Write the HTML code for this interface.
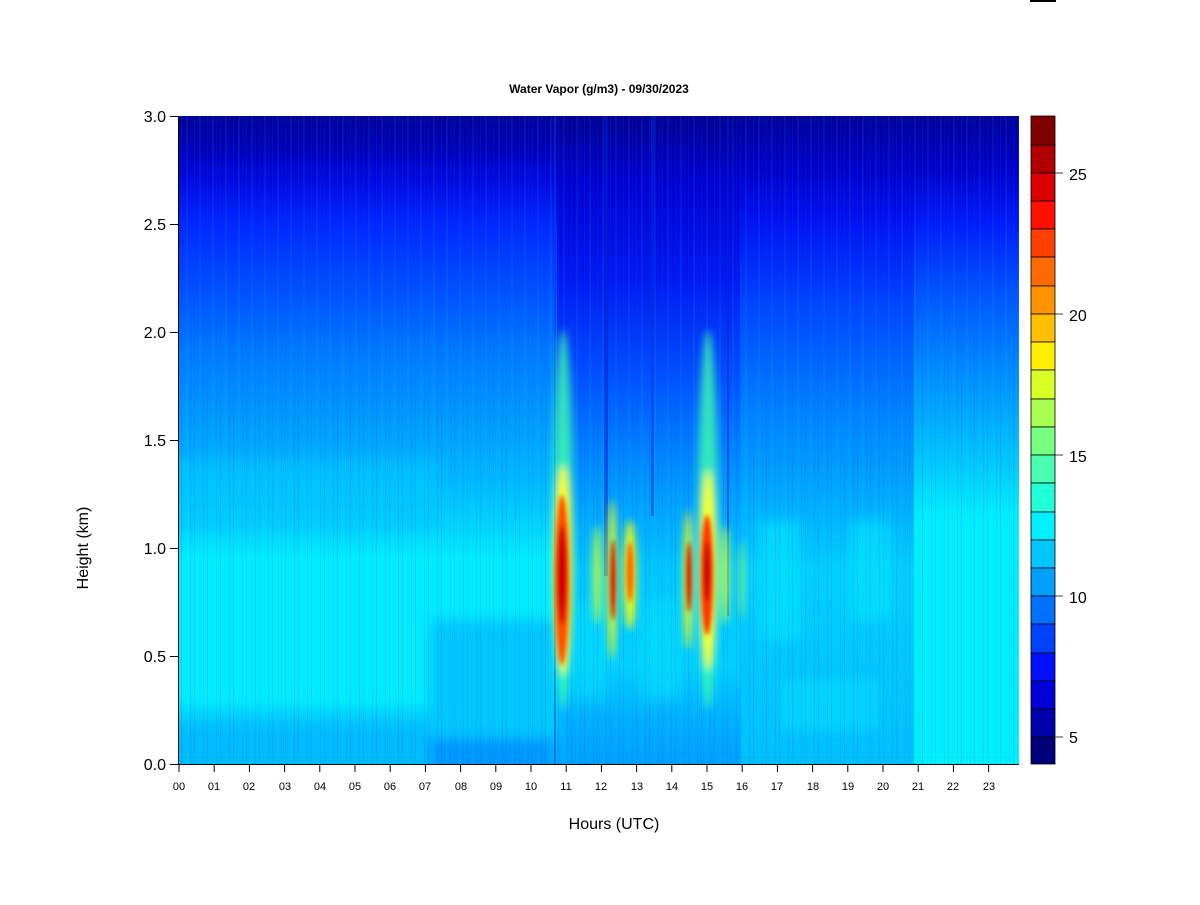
<!DOCTYPE html>
<html><head><meta charset="utf-8"><style>
body{margin:0;background:#fff;width:1200px;height:900px;overflow:hidden;font-family:"Liberation Sans",sans-serif}
</style></head><body>
<svg width="1200" height="900" xmlns="http://www.w3.org/2000/svg" font-family="Liberation Sans, sans-serif">
<defs>
<clipPath id="pc"><rect x="179" y="116" width="840" height="648"/></clipPath>
<linearGradient id="gA" x1="0" y1="116" x2="0" y2="764" gradientUnits="userSpaceOnUse">
<stop offset="0" stop-color="#000098"/>
<stop offset="0.05" stop-color="#0000b8"/>
<stop offset="0.1" stop-color="#0008e0"/>
<stop offset="0.17" stop-color="#0028ff"/>
<stop offset="0.27" stop-color="#0050ff"/>
<stop offset="0.36" stop-color="#0078ff"/>
<stop offset="0.46" stop-color="#0098ff"/>
<stop offset="0.56" stop-color="#00b8ff"/>
<stop offset="0.64" stop-color="#00d8ff"/>
<stop offset="0.68" stop-color="#00ecff"/>
<stop offset="0.9" stop-color="#00ecff"/>
<stop offset="0.94" stop-color="#00c4ff"/>
<stop offset="1" stop-color="#00b8ff"/>
</linearGradient>
<linearGradient id="gB" x1="0" y1="116" x2="0" y2="764" gradientUnits="userSpaceOnUse">
<stop offset="0" stop-color="#000090"/>
<stop offset="0.1" stop-color="#0000d0"/>
<stop offset="0.25" stop-color="#0018f0"/>
<stop offset="0.4" stop-color="#0050ff"/>
<stop offset="0.55" stop-color="#0090ff"/>
<stop offset="0.7" stop-color="#00c8ff"/>
<stop offset="0.85" stop-color="#00d0ff"/>
<stop offset="0.93" stop-color="#00b0ff"/>
<stop offset="1" stop-color="#00a0ff"/>
</linearGradient>
<linearGradient id="gC" x1="0" y1="116" x2="0" y2="764" gradientUnits="userSpaceOnUse">
<stop offset="0" stop-color="#000098"/>
<stop offset="0.08" stop-color="#0000c8"/>
<stop offset="0.16" stop-color="#0010f0"/>
<stop offset="0.3" stop-color="#0048ff"/>
<stop offset="0.45" stop-color="#0080ff"/>
<stop offset="0.58" stop-color="#00a8ff"/>
<stop offset="0.7" stop-color="#00d0ff"/>
<stop offset="0.85" stop-color="#00c8ff"/>
<stop offset="1" stop-color="#00c0ff"/>
</linearGradient>
<linearGradient id="gD" x1="0" y1="116" x2="0" y2="764" gradientUnits="userSpaceOnUse">
<stop offset="0" stop-color="#000098"/>
<stop offset="0.08" stop-color="#0000c8"/>
<stop offset="0.16" stop-color="#0018f8"/>
<stop offset="0.28" stop-color="#0058ff"/>
<stop offset="0.42" stop-color="#0098ff"/>
<stop offset="0.55" stop-color="#00d0ff"/>
<stop offset="0.62" stop-color="#00f0ff"/>
<stop offset="1" stop-color="#00f0ff"/>
</linearGradient>
<filter id="bl" x="-50%" y="-50%" width="200%" height="200%"><feGaussianBlur stdDeviation="4"/></filter>
<filter id="bl2" x="-50%" y="-50%" width="200%" height="200%"><feGaussianBlur stdDeviation="2"/></filter>
<filter id="bl6" x="-20%" y="-20%" width="140%" height="140%"><feGaussianBlur stdDeviation="6"/></filter>
<pattern id="str" width="13" height="648" patternUnits="userSpaceOnUse" x="179" y="116">
<rect x="2" width="1" height="648" fill="#0050ff" opacity="0.2"/>
<rect x="7" width="2" height="648" fill="#00e0ff" opacity="0.1"/>
<rect x="11" width="1" height="648" fill="#0040ff" opacity="0.15"/>
</pattern>
</defs>
<rect x="1030" y="0" width="26" height="2" fill="#000"/>
<text x="599" y="93" font-size="12" font-weight="bold" text-anchor="middle">Water Vapor (g/m3) - 09/30/2023</text>
<g clip-path="url(#pc)">
<rect x="179" y="116" width="380" height="648" fill="url(#gA)"/>
<rect x="557" y="116" width="185" height="648" fill="url(#gB)"/>
<rect x="740" y="116" width="176" height="648" fill="url(#gC)"/>
<rect x="914" y="116" width="105" height="648" fill="url(#gD)"/>
<g filter="url(#bl6)">
<rect x="430" y="620" width="128" height="150" fill="#00c8ff"/>
<rect x="160" y="730" width="270" height="50" fill="#00bcff"/>
<rect x="430" y="738" width="125" height="40" fill="#0098ff"/>
<rect x="160" y="460" width="280" height="70" fill="#00c8ff" opacity="0.6"/>
<rect x="760" y="520" width="40" height="120" fill="#00e8ff" opacity="0.6"/>
<rect x="850" y="520" width="40" height="100" fill="#00e8ff" opacity="0.6"/>
<rect x="780" y="680" width="100" height="50" fill="#00e0ff" opacity="0.6"/>
<rect x="640" y="600" width="40" height="100" fill="#00e0ff" opacity="0.6"/>
<rect x="575" y="600" width="30" height="100" fill="#00e0ff" opacity="0.6"/>
</g>
<rect x="179" y="116" width="840" height="648" fill="url(#str)"/>
<g opacity="0.5">
<rect x="554" y="116" width="2" height="648" fill="#0040e0"/>
<rect x="604" y="116" width="4" height="460" fill="#0020d0"/>
<rect x="651" y="116" width="3" height="400" fill="#0030e0"/>
<rect x="727" y="116" width="2" height="500" fill="#0020d0"/>
</g>
<g filter="url(#bl)">
<ellipse cx="563" cy="520" rx="10" ry="190" fill="#40ffb0" opacity="0.8"/>
<ellipse cx="708" cy="520" rx="10" ry="190" fill="#40ffb0" opacity="0.8"/>
<ellipse cx="563" cy="570" rx="9" ry="105" fill="#ffff00"/>
<ellipse cx="708" cy="570" rx="8" ry="100" fill="#ffff00"/>
<ellipse cx="612" cy="580" rx="4" ry="80" fill="#ffff00"/>
<ellipse cx="630" cy="575" rx="6" ry="55" fill="#ffff00"/>
<ellipse cx="688" cy="580" rx="4" ry="70" fill="#ffff00"/>
<ellipse cx="597" cy="575" rx="4" ry="50" fill="#c0ff40"/>
<ellipse cx="725" cy="575" rx="4" ry="50" fill="#c0ff40"/>
<ellipse cx="742" cy="580" rx="3" ry="40" fill="#a0ff60" opacity="0.7"/>
</g>
<g filter="url(#bl2)">
<ellipse cx="562" cy="580" rx="7" ry="85" fill="#ff5000"/>
<ellipse cx="562" cy="575" rx="5" ry="50" fill="#d00000"/>
<ellipse cx="707" cy="575" rx="6" ry="60" fill="#ff3000"/>
<ellipse cx="707" cy="572" rx="3" ry="30" fill="#c00000"/>
<ellipse cx="613" cy="580" rx="2.5" ry="40" fill="#e00000"/>
<ellipse cx="630" cy="572" rx="3.5" ry="30" fill="#ff6000"/>
<ellipse cx="689" cy="577" rx="2.5" ry="35" fill="#e00000"/>
</g>
</g>
<g stroke="#000" stroke-width="1">
<line x1="178.5" y1="116" x2="178.5" y2="764"/>
<line x1="170" y1="116.5" x2="179" y2="116.5"/>
<line x1="170" y1="224.5" x2="179" y2="224.5"/>
<line x1="170" y1="332.5" x2="179" y2="332.5"/>
<line x1="170" y1="440.5" x2="179" y2="440.5"/>
<line x1="170" y1="548.5" x2="179" y2="548.5"/>
<line x1="170" y1="656.5" x2="179" y2="656.5"/>
<line x1="170" y1="764.5" x2="179" y2="764.5"/>
<line x1="179" y1="764.5" x2="1019" y2="764.5"/>
</g>
<g font-size="16" text-anchor="end">
<text x="166" y="122">3.0</text><text x="166" y="230">2.5</text><text x="166" y="338">2.0</text>
<text x="166" y="446">1.5</text><text x="166" y="554">1.0</text><text x="166" y="662">0.5</text><text x="166" y="770">0.0</text>
</g>
<g font-size="11" text-anchor="middle">
<path d="M179 764v8M214.2 764v8M249.4 764v8M284.6 764v8M319.8 764v8M355 764v8M390.2 764v8M425.4 764v8M460.6 764v8M495.8 764v8M531 764v8M566.2 764v8M601.4 764v8M636.6 764v8M671.8 764v8M707 764v8M742.2 764v8M777.4 764v8M812.6 764v8M847.8 764v8M883 764v8M918.2 764v8M953.4 764v8M988.6 764v8" stroke="#000"/>
<text x="179" y="790">00</text><text x="214" y="790">01</text><text x="249" y="790">02</text><text x="285" y="790">03</text><text x="320" y="790">04</text><text x="355" y="790">05</text><text x="390" y="790">06</text><text x="425" y="790">07</text><text x="461" y="790">08</text><text x="496" y="790">09</text><text x="531" y="790">10</text><text x="566" y="790">11</text><text x="601" y="790">12</text><text x="637" y="790">13</text><text x="672" y="790">14</text><text x="707" y="790">15</text><text x="742" y="790">16</text><text x="777" y="790">17</text><text x="813" y="790">18</text><text x="848" y="790">19</text><text x="883" y="790">20</text><text x="918" y="790">21</text><text x="953" y="790">22</text><text x="989" y="790">23</text>
</g>
<text x="614" y="829" font-size="16" text-anchor="middle">Hours (UTC)</text>
<text x="88" y="548" font-size="16" text-anchor="middle" transform="rotate(-90 88 548)">Height (km)</text>
<g stroke="#000" stroke-width="0.8">
<rect x="1031" y="116" width="24" height="29" fill="#800000"/>
<rect x="1031" y="145" width="24" height="28" fill="#b00000"/>
<rect x="1031" y="173" width="24" height="28" fill="#dc0000"/>
<rect x="1031" y="201" width="24" height="28" fill="#ff1000"/>
<rect x="1031" y="229" width="24" height="28" fill="#ff4000"/>
<rect x="1031" y="257" width="24" height="29" fill="#ff6a00"/>
<rect x="1031" y="286" width="24" height="28" fill="#ff9400"/>
<rect x="1031" y="314" width="24" height="28" fill="#ffbe00"/>
<rect x="1031" y="342" width="24" height="28" fill="#ffee00"/>
<rect x="1031" y="370" width="24" height="29" fill="#d8ff26"/>
<rect x="1031" y="399" width="24" height="28" fill="#a8ff50"/>
<rect x="1031" y="427" width="24" height="28" fill="#78ff80"/>
<rect x="1031" y="455" width="24" height="28" fill="#48ffb0"/>
<rect x="1031" y="483" width="24" height="29" fill="#20ffd8"/>
<rect x="1031" y="512" width="24" height="28" fill="#00f0ff"/>
<rect x="1031" y="540" width="24" height="28" fill="#00c8ff"/>
<rect x="1031" y="568" width="24" height="28" fill="#00a0ff"/>
<rect x="1031" y="596" width="24" height="28" fill="#0070ff"/>
<rect x="1031" y="624" width="24" height="29" fill="#0040ff"/>
<rect x="1031" y="653" width="24" height="28" fill="#0010ff"/>
<rect x="1031" y="681" width="24" height="28" fill="#0000d8"/>
<rect x="1031" y="709" width="24" height="28" fill="#0000aa"/>
<rect x="1031" y="737" width="24" height="27" fill="#00007a"/>
<path d="M1055 173h8M1055 314h8M1055 455h8M1055 596h8M1055 737h8"/>
</g>
<g font-size="16">
<text x="1069" y="180">25</text><text x="1069" y="321">20</text><text x="1069" y="462">15</text><text x="1069" y="603">10</text><text x="1069" y="743">5</text>
</g>
</svg>
</body></html>
